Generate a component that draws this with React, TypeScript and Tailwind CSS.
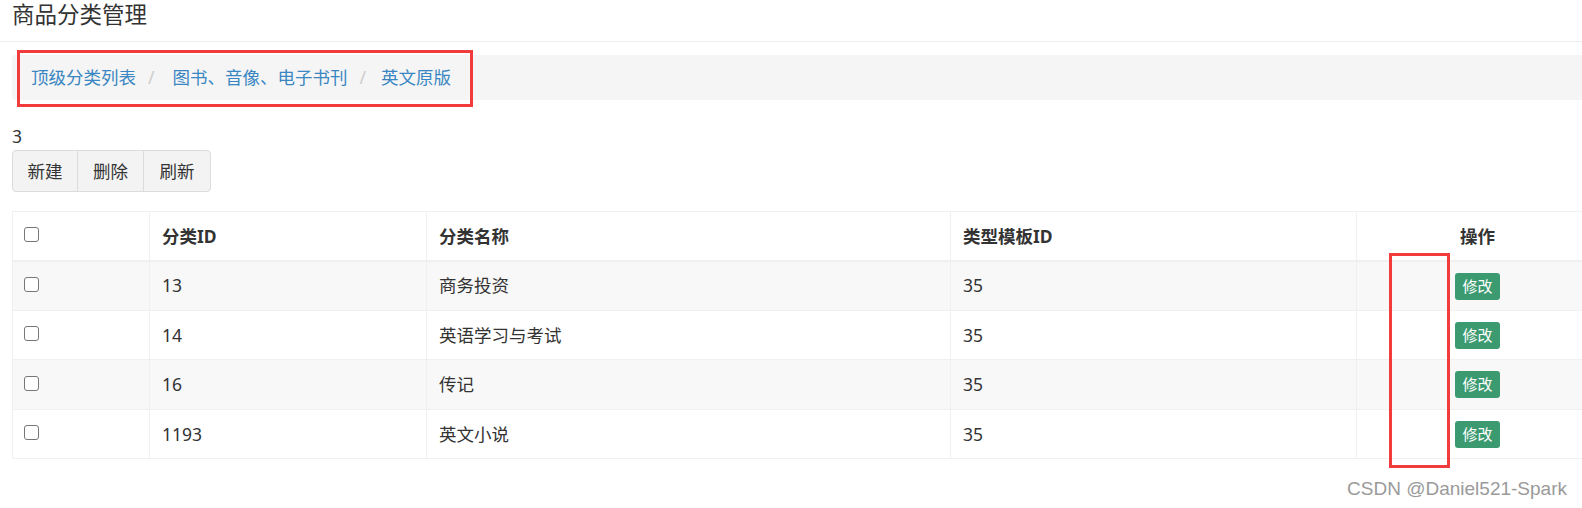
import React from "react";

const rows = [
  { id: "13", name: "商务投资", tpl: "35" },
  { id: "14", name: "英语学习与考试", tpl: "35" },
  { id: "16", name: "传记", tpl: "35" },
  { id: "1193", name: "英文小说", tpl: "35" },
];

function Box() {
  return <span className="relative -top-[1px] block w-[15px] h-[15px] border border-[#767676] rounded-[3px] bg-white" />;
}

export default function App() {
  return (
    <div
      className="relative w-[1582px] h-[508px] overflow-hidden bg-white text-[#333] px-[12px]"
      style={{ fontFamily: '"Noto Sans", "Noto Sans CJK SC", sans-serif' }}
    >
      {/* header */}
      <div className="h-[42px] border-b border-[#eeeeee] -mx-[12px] px-[12px]">
        <h1 className="text-[22.5px] leading-[30px] text-[#333]">商品分类管理</h1>
      </div>

      {/* breadcrumb */}
      <div className="mt-[13px] h-[45px] w-[1586px] bg-[#f5f5f5] rounded-[4px] flex items-center pl-[19px] text-[17.5px]">
        <a className="text-[#3a86c2]">顶级分类列表</a>
        <span className="text-[#ccc] px-[12px]">/</span>
        <a className="text-[#3a86c2] pl-[6px]">图书、音像、电子书刊</a>
        <span className="text-[#ccc] px-[12px]">/</span>
        <a className="text-[#3a86c2] pl-[3px]">英文原版</a>
      </div>

      <div className="mt-[24px] text-[17.5px] leading-[25px]">3</div>

      {/* button group */}
      <div className="mt-[1px] inline-flex h-[42px] border border-[#dcdcdc] rounded-[4px] bg-[#f3f3f3] text-[17.5px]">
        <button className="w-[65px] border-r border-[#dcdcdc]">新建</button>
        <button className="w-[66px] border-r border-[#dcdcdc]">删除</button>
        <button className="w-[66px]">刷新</button>
      </div>

      {/* table */}
      <table className="mt-[19px] table-fixed border-collapse w-[1586px] text-[17.5px]">
        <colgroup>
          <col className="w-[137px]" />
          <col className="w-[277px]" />
          <col className="w-[524px]" />
          <col className="w-[406px]" />
          <col className="w-[242px]" />
        </colgroup>
        <thead>
          <tr className="h-[49px] border-b-2 border-[#f0f0f0]">
            <th className="border border-[#f0f0f0] text-left pl-[11px]"><Box /></th>
            <th className="border border-[#f0f0f0] text-left pl-[12px] font-bold">分类ID</th>
            <th className="border border-[#f0f0f0] text-left pl-[12px] font-bold">分类名称</th>
            <th className="border border-[#f0f0f0] text-left pl-[12px] font-bold">类型模板ID</th>
            <th className="border border-[#f0f0f0] text-center font-bold">操作</th>
          </tr>
        </thead>
        <tbody>
          {rows.map((r, i) => (
            <tr key={r.id} className={i % 2 === 0 ? "h-[49.5px] bg-[#f8f8f8]" : "h-[49.5px] bg-white"}>
              <td className="border border-[#f0f0f0] pl-[11px]"><Box /></td>
              <td className="border border-[#f0f0f0] pl-[12px]">{r.id}</td>
              <td className="border border-[#f0f0f0] pl-[12px]">{r.name}</td>
              <td className="border border-[#f0f0f0] pl-[12px]">{r.tpl}</td>
              <td className="border border-[#f0f0f0] text-center">
                <button className="inline-flex items-center justify-center w-[45px] h-[27px] rounded-[3px] bg-[#3c9a70] text-white text-[15px] leading-none">
                  修改
                </button>
              </td>
            </tr>
          ))}
        </tbody>
      </table>

      {/* red annotation boxes */}
      <div className="absolute left-[17px] top-[50px] w-[456px] h-[57px] border-[3px] border-[#f03c3c]" />
      <div className="absolute left-[1389px] top-[253px] w-[61px] h-[215px] border-[3px] border-[#f03c3c]" />

      {/* watermark */}
      <div
        className="absolute right-[15px] top-[475px] text-[19px] text-[#9a9a9a]"
        style={{ fontFamily: '"Liberation Sans", Arial, sans-serif' }}
      >
        CSDN @Daniel521-Spark
      </div>
    </div>
  );
}
